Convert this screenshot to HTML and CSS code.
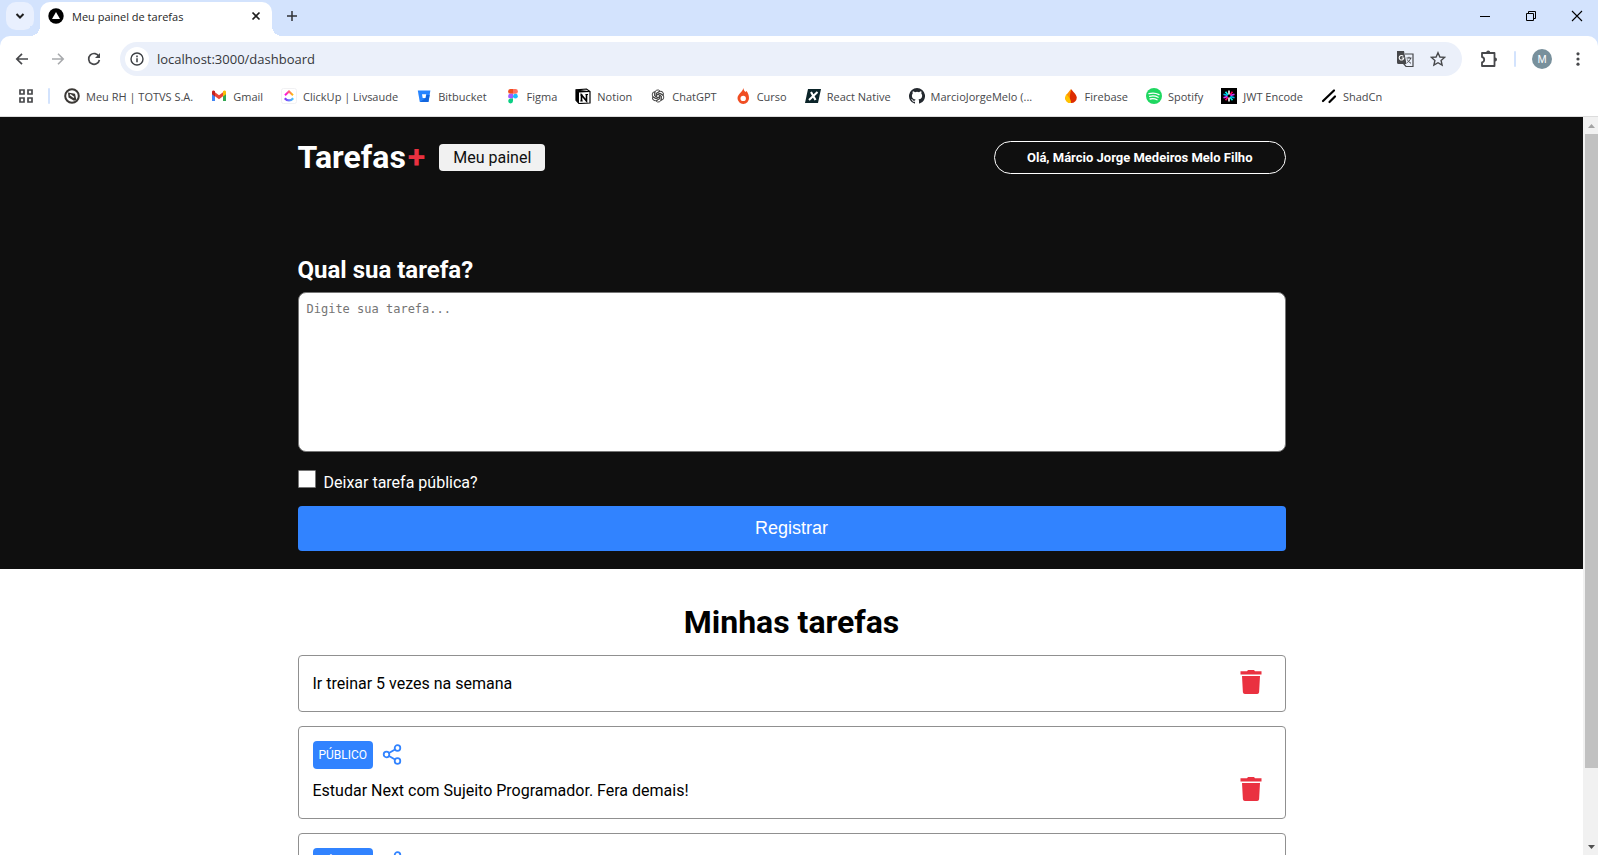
FILE: index.html
```html
<!DOCTYPE html>
<html lang="pt-BR">
<head>
<meta charset="utf-8">
<meta name="viewport" content="width=device-width, initial-scale=1">
<title>Meu painel de tarefas</title>
<link rel="stylesheet" href="styles.css">
</head>
<body>
<div class="browser">
  <div class="tab-strip">
    <button class="tab-search" aria-label="Pesquisar guias"><svg width="12" height="12" viewBox="0 0 12 12"><path d="M2.5 4l3.5 3.5L9.500 4" fill="none" stroke="#1f1f1f" stroke-width="2"/></svg></button>
    <div class="tab">
      <svg width="16" height="16" viewBox="0 0 16 16"><circle cx="8" cy="8" r="7.700" fill="#000"/><path d="M8 4l4 7H4z" fill="#fff"/></svg>
      <span class="tab-title">Meu painel de tarefas</span>
      <button class="bare" aria-label="Fechar guia"><svg width="12" height="12" viewBox="0 0 12 12"><path d="M2.500 2.500l7 7M9.500 2.500l-7 7" stroke="#1f1f1f" stroke-width="1.700"/></svg></button>
    </div>
    <button class="bare" aria-label="Nova guia"><svg width="12" height="12" viewBox="0 0 12 12"><path d="M6 1v10M1 6h10" stroke="#303236" stroke-width="1.500"/></svg></button>
    <div class="window-controls">
      <button class="bare" aria-label="Minimizar"><svg width="12" height="12" viewBox="0 0 12 12"><path d="M1 6.500h10" stroke="#000"/></svg></button>
      <button class="bare" aria-label="Restaurar"><svg width="12" height="12" viewBox="0 0 12 12"><path d="M1.500 3.500h7v7h-7zM3.500 3.500v-2h7v7h-2" fill="none" stroke="#000"/></svg></button>
      <button class="bare" aria-label="Fechar"><svg width="12" height="12" viewBox="0 0 12 12"><path d="M1 1l10 10M11 1L1 11" stroke="#000" stroke-width="1.100"/></svg></button>
    </div>
  </div>
  <div class="toolbar">
    <div class="nav-buttons">
      <button class="bare" aria-label="Voltar"><svg width="16" height="16" viewBox="0 0 16 16"><path d="M14 8H3.500M8 2.800L2.800 8 8 13.200" fill="none" stroke="#47484b" stroke-width="1.700"/></svg></button>
      <button class="bare" aria-label="Avançar"><svg width="16" height="16" viewBox="0 0 16 16"><path d="M2 8h10.500M8 2.800L13.200 8 8 13.200" fill="none" stroke="#a8aaad" stroke-width="1.600"/></svg></button>
      <button class="bare" aria-label="Recarregar"><svg width="16" height="16" viewBox="0 0 16 16"><path d="M13 5.600A5.400 5.400 0 1 0 13.400 9" fill="none" stroke="#47484b" stroke-width="1.700"/><path d="M14 2v5H9z" fill="#47484b"/></svg></button>
    </div>
    <div class="omnibox">
      <button class="site-info" aria-label="Informações do site"><svg width="16" height="16" viewBox="0 0 16 16"><circle cx="8" cy="8" r="6" fill="none" stroke="#3c3f43" stroke-width="1.400"/><path d="M8 7.200v4M8 4.600v1.600" stroke="#3c3f43" stroke-width="1.500"/></svg></button>
      <input class="url" type="text" aria-label="Endereço" value="localhost:3000/dashboard">
      <button class="bare" aria-label="Traduzir"><svg width="18" height="18" viewBox="0 0 18 18"><path d="M1 1h7l2.500 13H2.500A1.500 1.500 0 0 1 1 12.500z" fill="#47484b"/><path d="M9 4h8v12.500H10l-2.500-3" fill="none" stroke="#47484b" stroke-width="1.200"/><path d="M7.300 6.300A2.300 2.300 0 1 0 7.800 8H5.700" fill="none" stroke="#fff" stroke-width="1.100"/><path d="M10.500 8h5M13 6.800V8M14.700 8c-.5 2.200-2 3.700-3.500 4.500M11.300 9.500c.7 1.600 2 2.800 3.700 3.800" fill="none" stroke="#47484b"/></svg></button>
      <button class="bare" aria-label="Favoritar"><svg width="16" height="16" viewBox="0 0 16 16"><path d="M8 1.700l1.900 4.300 4.700.4-3.500 3.100 1 4.600L8 11.700l-4.100 2.400 1-4.600L1.400 6.400 6.100 6z" fill="none" stroke="#47484b" stroke-width="1.400"/></svg></button>
    </div>
    <div class="toolbar-actions">
      <button class="bare" aria-label="Extensões"><svg width="18" height="18" viewBox="0 0 18 18"><path d="M2 3h12.500V16H2V12.300a2.700 2.700 0 0 0 0-5.300z" fill="none" stroke="#47484b" stroke-width="1.800" stroke-linejoin="round"/><path d="M6.200 2.500a2 2 0 0 1 4 0zM15 7.500a2 2 0 0 1 0 4z" fill="#47484b"/></svg></button>
      <span class="divider"></span>
      <button class="avatar" aria-label="Perfil">M</button>
      <button class="bare" aria-label="Menu"><svg width="16" height="16" viewBox="0 0 16 16"><g fill="#47484b"><circle cx="8" cy="2.800" r="1.600"/><circle cx="8" cy="8" r="1.600"/><circle cx="8" cy="13.200" r="1.600"/></g></svg></button>
    </div>
  </div>
  <nav class="bookmarks" aria-label="Favoritos">
    <button class="bare" aria-label="Apps"><svg width="16" height="16" viewBox="0 0 16 16"><path d="M2 2h4v4H2zM10 2h4v4h-4zM2 10h4v4H2zM10 10h4v4h-4z" fill="none" stroke="#47484b" stroke-width="1.700"/></svg></button>
    <span class="divider"></span>
    <div class="bookmark-list">
    <a class="bookmark" href="#"><svg viewBox="0 0 16 16"><circle cx="8" cy="8" r="6.800" fill="#fff" stroke="#3b3835" stroke-width="2"/><path d="M4 4.500l7 1.300 1.300 6L10 12.700 4.500 9.500z" fill="#3b3835"/><path d="M6 6.500l4 3" stroke="#fff" stroke-width="1.500"/></svg><span>Meu RH | TOTVS S.A.</span></a>
    <a class="bookmark" href="#"><svg viewBox="0 0 16 16"><path d="M1 4v9h3V6z" fill="#4285f4"/><path d="M12 6v7h3V4z" fill="#34a853"/><path d="M4 4.300l4 3 4-3v4l-4 3-4-3z" fill="#ea4335"/><path d="M1 6.200V4c0-1.500 1.700-2 3-.8v5.200z" fill="#c5221f"/><path d="M15 6.200V4c0-1.500-1.700-2-3-.8v5.200z" fill="#fbbc04"/></svg><span>Gmail</span></a>
    <a class="bookmark" href="#"><svg viewBox="0 0 16 16"><defs><linearGradient id="cu1"><stop offset="0" stop-color="#ff02f0"/><stop offset="1" stop-color="#ffc800"/></linearGradient><linearGradient id="cu2"><stop offset="0" stop-color="#8930fd"/><stop offset="1" stop-color="#49ccf9"/></linearGradient></defs><rect x=".5" y=".5" width="15" height="15" rx="2" fill="#fff" stroke="#f1f1f3"/><path d="M4 7.300l4-3.800 4 3.800" fill="none" stroke="url(#cu1)" stroke-width="2"/><path d="M3.800 10.200c2.400 3 6 3 8.400 0" fill="none" stroke="url(#cu2)" stroke-width="2.200"/></svg><span>ClickUp | Livsaude</span></a>
    <a class="bookmark" href="#"><svg viewBox="0 0 16 16"><path d="M1.800 2.500h12.600l-2 11.500H3.800z" fill="#2684ff"/><path d="M10.500 7h3.200l-1.300 7H4l5-3.500z" fill="#1265dd"/><path d="M6 6.200h4.200l-.7 3.800H6.700z" fill="#fff"/></svg><span>Bitbucket</span></a>
    <a class="bookmark" href="#"><svg viewBox="0 0 16 16"><path d="M8 1H5.500a2.400 2.400 0 0 0 0 4.800H8z" fill="#f24e1e"/><path d="M8 1h2.500a2.400 2.400 0 0 1 0 4.800H8z" fill="#ff7262"/><path d="M8 5.800H5.500a2.400 2.400 0 0 0 0 4.800H8z" fill="#a259ff"/><circle cx="10.400" cy="8.200" r="2.400" fill="#1abcfe"/><path d="M8 10.600H5.500A2.400 2.400 0 1 0 8 13z" fill="#0acf83"/></svg><span>Figma</span></a>
    <a class="bookmark" href="#"><svg viewBox="0 0 16 16"><path d="M1 1.800L11.500 1 15 3.500V15l-11 .5L1 12.300z" fill="#fff" stroke="#000" stroke-width="1.200"/><path d="M1 1.800L4 4.500v11L1 12.300zM1 1.500L4 4.500 15 4V3.200z" fill="#000"/><path d="M6.500 13V7l5 6V6.500" fill="none" stroke="#000" stroke-width="1.600"/><path d="M5.300 7h2.200M5.300 13h2.400M10.500 6.500h2.500" fill="none" stroke="#000"/></svg><span>Notion</span></a>
    <a class="bookmark" href="#"><svg viewBox="0 0 16 16"><g fill="none" stroke="#4a4a4a"><path id="knot" d="M8 9.800L4.800 8V4.700A2.900 2.900 0 0 1 10 3.100L6.700 5v3"/><use href="#knot" transform="rotate(60 8 8)"/><use href="#knot" transform="rotate(120 8 8)"/><use href="#knot" transform="rotate(180 8 8)"/><use href="#knot" transform="rotate(240 8 8)"/><use href="#knot" transform="rotate(300 8 8)"/></g></svg><span>ChatGPT</span></a>
    <a class="bookmark" href="#"><svg viewBox="0 0 16 16"><path d="M8.300 0c.3 2 1.200 3 2.200 4l1-.9C13 5 14 7.500 14 10.200A5.700 5.700 0 0 1 8.300 16a5.700 5.700 0 0 1-5.800-5.700C2.500 6 7.700 4 8.300 0z" fill="#f04e23"/><circle cx="8.200" cy="10.400" r="2.700" fill="#fff"/></svg><span>Curso</span></a>
    <a class="bookmark" href="#"><svg viewBox="0 0 16 16"><path d="M3 1h13l-3 14H0z" fill="#0b2429"/><path d="M6 4l4.500 8M12.500 4L4 12" stroke="#fff" stroke-width="2.100"/></svg><span>React Native</span></a>
    <a class="bookmark wide" href="#"><svg viewBox="0 0 16 16"><path fill="#24292f" d="M8 0a8 8 0 0 0-2.530 15.590c.4.070.55-.17.55-.38v-1.490c-2.230.48-2.700-.95-2.700-.95-.36-.92-.89-1.170-.89-1.170-.73-.5.060-.49.060-.49.800.06 1.230.83 1.230.83.710 1.220 1.870.87 2.330.66.070-.52.280-.87.510-1.070-1.780-.2-3.640-.89-3.640-3.950 0-.87.310-1.590.82-2.150-.08-.2-.36-1.020.08-2.120 0 0 .67-.21 2.200.82a7.600 7.600 0 0 1 4 0c1.530-1.040 2.200-.82 2.200-.82.440 1.100.16 1.920.08 2.120.51.560.82 1.270.82 2.150 0 3.070-1.870 3.750-3.650 3.950.29.250.54.730.54 1.480v2.200c0 .21.150.46.550.38A8 8 0 0 0 8 0z"/></svg><span>MarcioJorgeMelo (...</span></a>
    <a class="bookmark" href="#"><svg viewBox="0 0 16 16"><path d="M8 1l-4 5-2 4a6 6 0 0 0 6 5z" fill="#ff9100"/><path d="M8.500 1C9 3 13.500 6 13.800 9.500A5.500 5.500 0 0 1 8 15C6 11 7 5 8.500 1z" fill="#dd2c00"/><path d="M3.500 6C2 8 1.500 12 4.500 14.200c1.500 1 3.500.8 3.500.8C8 10 5 9 3.500 6z" fill="#ffc400"/></svg><span>Firebase</span></a>
    <a class="bookmark" href="#"><svg viewBox="0 0 16 16"><circle cx="8" cy="8" r="8" fill="#1ed760"/><path d="M3 5.700c3.300-1 7-.7 10 .9M3.600 8.400c2.700-.8 5.900-.5 8.500.9M4.100 11c2.300-.6 4.800-.4 7 .8" fill="none" stroke="#fff" stroke-width="1.300" stroke-linecap="round"/></svg><span>Spotify</span></a>
    <a class="bookmark" href="#"><svg viewBox="0 0 16 16"><path d="M0 0h16v16H0z" fill="#000"/><g stroke-width="1.700"><path d="M8 6.500V2.500M8 9.500v4" stroke="#eee"/><path d="M7 7L4.500 3.800M9 9l2.500 3.200" stroke="#00f2e6"/><path d="M9 7l2.500-3.200M7 9l-2.500 3.200" stroke="#fb015b"/><path d="M6.500 8.500l-4 1.300M9.500 7.500l4-1.300" stroke="#d63aff"/><path d="M6.500 7.500l-4-1.300M9.500 8.500l4 1.300" stroke="#00b9f1"/></g></svg><span>JWT Encode</span></a>
    <a class="bookmark" href="#"><svg viewBox="0 0 16 16"><path d="M2 13L13 2.500M8.500 14l5.500-5.500" stroke="#000" stroke-width="2.200" stroke-linecap="round"/></svg><span>ShadCn</span></a>
    </div>
  </nav>
</div>

<div class="viewport">
  <div class="page">
    <div class="hero">
      <header class="container header">
        <div class="brand">
          <a class="logo" href="#">Tarefas<span>+</span></a>
          <a class="panel-link" href="#">Meu painel</a>
        </div>
        <button class="user">Olá, Márcio Jorge Medeiros Melo Filho</button>
      </header>
      <form class="container task-form">
        <label class="form-title" for="task">Qual sua tarefa?</label>
        <textarea id="task" class="task-input" placeholder="Digite sua tarefa..."></textarea>
        <div class="check-row">
          <input id="public" class="check" type="checkbox">
          <label for="public">Deixar tarefa pública?</label>
        </div>
        <button class="submit" type="button">Registrar</button>
      </form>
    </div>
    <main class="container tasks">
      <h1 class="tasks-title">Minhas tarefas</h1>
      <article class="task">
        <div class="task-row">
          <p>Ir treinar 5 vezes na semana</p>
          <button class="bare trash" aria-label="Excluir"><svg width="24" height="24" viewBox="0 0 24 24"><path d="M1.500 1.300h6.500L9 0h6l1 1.300h6.500v3.200h-21zM3 6h18l-.9 16.200a2 2 0 0 1-2 1.800H5.900a2 2 0 0 1-2-1.800z" fill="#ea3140"/></svg></button>
        </div>
      </article>
      <article class="task">
        <div class="tag-row">
          <span class="tag">PÚBLICO</span>
          <button class="bare" aria-label="Compartilhar"><svg width="22" height="22" viewBox="0 0 22 22"><g fill="none" stroke="#3183ff" stroke-width="1.800"><circle cx="5.500" cy="10.500" r="2.800"/><circle cx="16.500" cy="4" r="2.800"/><circle cx="16.500" cy="17" r="2.800"/><path d="M8 9l6-3.600M8 12l6 3.600"/></g></svg></button>
        </div>
        <div class="task-row">
          <p>Estudar Next com Sujeito Programador. Fera demais!</p>
          <button class="bare trash" aria-label="Excluir"><svg width="24" height="24" viewBox="0 0 24 24"><path d="M1.500 1.300h6.500L9 0h6l1 1.300h6.500v3.200h-21zM3 6h18l-.9 16.200a2 2 0 0 1-2 1.800H5.900a2 2 0 0 1-2-1.800z" fill="#ea3140"/></svg></button>
        </div>
      </article>
      <article class="task">
        <div class="tag-row">
          <span class="tag">PÚBLICO</span>
          <button class="bare" aria-label="Compartilhar"><svg width="22" height="22" viewBox="0 0 22 22"><g fill="none" stroke="#3183ff" stroke-width="1.800"><circle cx="5.500" cy="10.500" r="2.800"/><circle cx="16.500" cy="4" r="2.800"/><circle cx="16.500" cy="17" r="2.800"/><path d="M8 9l6-3.600M8 12l6 3.600"/></g></svg></button>
        </div>
      </article>
    </main>
  </div>
  <div class="scrollbar" aria-hidden="true">
    <svg width="15" height="17" viewBox="0 0 15 17"><path d="M5 11l3.500-4L12 11z" fill="#a3a3a3"/></svg>
    <div class="scroll-track"><div class="scroll-thumb"></div></div>
    <svg width="15" height="17" viewBox="0 0 15 17"><path d="M5 7l3.500 4L12 7z" fill="#505050"/></svg>
  </div>
</div>
</body>
</html>
```

FILE: styles.css
```css
* { box-sizing: border-box; margin: 0; padding: 0; }

body {
  display: flex;
  flex-direction: column;
  height: 100vh;
  overflow: hidden;
  background: #fff;
  color: #000;
  font-family: Roboto, "Liberation Sans", sans-serif;
  font-size: 16px;
}

a { color: inherit; text-decoration: none; }
button { font-family: "Liberation Sans", Arial, sans-serif; cursor: pointer; }
svg { display: block; flex: none; }
.bare { border: 0; background: none; flex: none; }

/* Browser frame */
.browser {
  flex: none;
  background: #d3e3fd;
  border-bottom: 1px solid #dcdcdc;
  color: #47484b;
  font-family: "Open Sans", "Noto Sans", sans-serif;
  font-size: 11px;
}

.tab-strip {
  display: flex;
  align-items: center;
  height: 36px;
  padding: 0 15px 0 6px;
}

.tab-search {
  display: grid;
  place-items: center;
  width: 28px;
  height: 28px;
  margin: 0 6px 4px 0;
  border: 0;
  border-radius: 10px;
  background: #e9f0fe;
}

.tab {
  position: relative;
  display: flex;
  align-items: center;
  gap: 8px;
  width: 232px;
  height: 34px;
  margin: 2px 14px 0 0;
  padding: 0 10px 6px 8px;
  border-radius: 10px 10px 0 0;
  background: #fff;
  color: #1f1f1f;
}

.tab::before,
.tab::after {
  content: "";
  position: absolute;
  bottom: 0;
  width: 10px;
  height: 10px;
}
.tab::before { left: -10px; background: radial-gradient(circle at 0 0, #d3e3fd 10px, #fff 10px); }
.tab::after { right: -10px; background: radial-gradient(circle at 100% 0, #d3e3fd 10px, #fff 10px); }

.tab-title { flex: 1; white-space: nowrap; }
.tab-strip > .bare, .window-controls { padding-bottom: 4px; }
.window-controls { display: flex; gap: 34px; margin-left: auto; }

.toolbar {
  display: flex;
  align-items: center;
  height: 44px;
  padding: 2px 12px 0 14px;
  border-radius: 10px 10px 0 0;
  background: #fff;
}

.nav-buttons { display: flex; gap: 20px; margin-right: 18px; }

.omnibox {
  display: flex;
  flex: 1;
  align-items: center;
  gap: 16px;
  height: 34px;
  padding: 0 16px 0 5px;
  border-radius: 17px;
  background: #ebf0fa;
}

.site-info {
  display: grid;
  place-items: center;
  width: 24px;
  height: 24px;
  margin-right: -8px;
  border: 0;
  border-radius: 50%;
  background: #fff;
}

.url {
  flex: 1;
  border: 0;
  outline: 0;
  background: none;
  color: #35373a;
  font: 13px "Open Sans", "Noto Sans", sans-serif;
}

.toolbar-actions { display: flex; align-items: center; gap: 16px; margin-left: 18px; }
.divider { width: 2px; height: 16px; border-radius: 1px; background: #d3e3fd; }

.avatar {
  width: 20px;
  height: 20px;
  margin-right: 2px;
  border: 0;
  border-radius: 50%;
  background: #78909c;
  color: #fff;
  font-size: 11px;
}

.bookmarks {
  display: flex;
  align-items: center;
  gap: 14px;
  height: 36px;
  padding: 0 18px 4px;
  background: #fff;
}

.bookmark-list { display: flex; gap: 18px; }
.bookmark { display: flex; align-items: center; gap: 6px; white-space: nowrap; }
.bookmark svg { width: 16px; height: 16px; }
.wide { width: 136px; }

/* Page */
.viewport { display: flex; flex: 1; min-height: 0; }
.page { flex: 1; overflow: hidden; }
.container { width: 100%; max-width: 1024px; margin: 0 auto; padding: 0 18px; }
.hero { padding-bottom: 18px; background: #0f0f0f; color: #fff; }

.header { display: flex; align-items: center; justify-content: space-between; height: 80px; }
.brand { display: flex; align-items: center; gap: 14px; }
.logo { font-size: 32px; font-weight: 700; }
.logo span { padding-left: 2px; color: #ea3140; }
.panel-link { padding: 4px 14px; border-radius: 4px; background: #f1f1f1; color: #0f0f0f; line-height: 19px; }

.user {
  padding: 8px 32px;
  border: 1px solid #fff;
  border-radius: 17px;
  background: transparent;
  color: #fff;
  font-family: Roboto, "Liberation Sans", sans-serif;
  font-size: 13px;
  font-weight: 700;
  line-height: 15px;
}

.task-form { display: flex; flex-direction: column; padding-top: 59px; }
.form-title { font-size: 24px; font-weight: 700; line-height: 28px; }

.task-input {
  height: 160px;
  margin: 8px 0 18px;
  padding: 9px 8px;
  border: 1px solid #767676;
  border-radius: 8px;
  outline: 0;
  resize: none;
  background: #fff;
  font: 12px "DejaVu Sans Mono", monospace;
}
.task-input::placeholder { color: #757575; }

.check-row { display: flex; align-items: flex-start; gap: 8px; height: 36px; line-height: 26px; }
.check { appearance: none; width: 18px; height: 18px; border: 1px solid #767676; border-radius: 1px; background: #fff; }
.check:checked { background: #3183ff; }

.submit {
  height: 45px;
  border: 0;
  border-radius: 4px;
  background: #3183ff;
  color: #fff;
  font-size: 18px;
}

.tasks { display: flex; flex-direction: column; gap: 14px; padding-top: 34px; }
.tasks-title { font-size: 32px; line-height: 38px; text-align: center; }
.task { display: flex; flex-direction: column; gap: 8px; padding: 14px; border: 1px solid #909090; border-radius: 4px; }
.tag-row { display: flex; align-items: center; gap: 8px; }
.tag { padding: 0 6px; border-radius: 4px; background: #3183ff; color: #fff; font-size: 12px; line-height: 28px; }
.task-row { display: flex; align-items: center; justify-content: space-between; line-height: 27px; }
.trash { margin: 0 8px 3px; }

.scrollbar { display: flex; flex: none; flex-direction: column; width: 15px; background: #f1f1f1; }
.scroll-track { flex: 1; padding-left: 2px; }
.scroll-thumb { height: 90%; background: #c1c1c1; }
```
